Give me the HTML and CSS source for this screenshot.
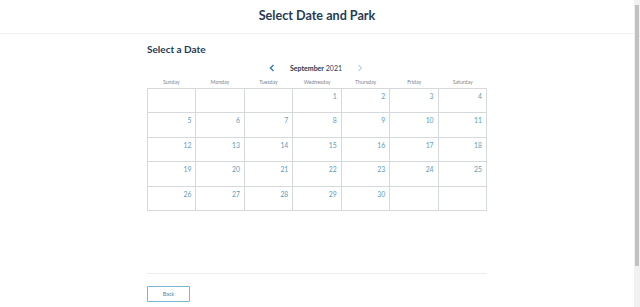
FILE: index.html
```html
<!DOCTYPE html>
<html lang="en">
<head>
<meta charset="UTF-8">
<meta name="viewport" content="width=device-width, initial-scale=1.0">
<title>Select Date and Park</title>
<link rel="stylesheet" href="styles.css">
</head>
<body>

<div class="window">
    <div class="page">

        <!-- HEADER -->
        <header class="top-bar">
            <h1>Select Date and Park</h1>
        </header>

        <!-- CALENDAR -->
        <main class="content">
            <h2 class="section-title">Select a Date</h2>

            <div class="month-nav">
                <span class="arrow arrow-prev">
                    <svg width="6" height="8" viewBox="0 0 6 8"><path d="M4.5 1 L1.5 4 L4.5 7" fill="none" stroke="currentColor" stroke-width="1.6"/></svg>
                </span>
                <span class="month-label"><b>September</b> 2021</span>
                <span class="arrow arrow-next">
                    <svg width="6" height="8" viewBox="0 0 6 8"><path d="M1.5 1 L4.5 4 L1.5 7" fill="none" stroke="currentColor" stroke-width="1.2"/></svg>
                </span>
            </div>

            <div class="weekdays">
                <span>Sunday</span>
                <span>Monday</span>
                <span>Tuesday</span>
                <span>Wednesday</span>
                <span>Thursday</span>
                <span>Friday</span>
                <span>Saturday</span>
            </div>

            <div class="days" id="days"></div>

            <div class="actions">
                <button class="btn-back">Back</button>
            </div>
        </main>
    </div>

    <!-- SCROLLBAR -->
    <div class="scrollbar">
        <div class="scroll-arrow up"></div>
        <div class="scroll-thumb"></div>
        <div class="scroll-arrow down"></div>
    </div>
</div>

<script>
/* DAYS */
const grid = document.getElementById('days');
const offset = 3; // sept 1 2021 = wednesday
for (let i = 0; i < 35; i++) {
    const cell = document.createElement('div');
    cell.className = 'day';
    const n = i - offset + 1;
    if (n >= 1 && n <= 30) cell.textContent = n;
    grid.appendChild(cell);
}
</script>

</body>
</html>
```

FILE: styles.css
```css
* {
    margin: 0;
    padding: 0;
    box-sizing: border-box;
}

html, body {
    width: 100%;
    height: 100%;
    background: #fff;
    font-family: 'Lato', 'Noto Sans', Arial, sans-serif;
    color: #253b56;
    overflow: hidden;
}

.window {
    display: flex;
    height: 100%;
}

.page {
    flex: 1;
    min-width: 0;
}

/* =======================
     HEADER
======================== */
.top-bar {
    height: 34px;
    border-bottom: 1px solid #f0f0f0;
    display: flex;
    align-items: center;
    justify-content: center;
}

.top-bar h1 {
    font-size: 12.6px;
    font-weight: 700;
    margin-top: -2px;
}

/* =======================
     CONTENT
======================== */
.content {
    width: 340px;
    margin: 0 auto;
}

.section-title {
    font-size: 10px;
    font-weight: 700;
    margin-top: 9px;
    line-height: 12px;
}

.month-nav {
    display: flex;
    align-items: center;
    justify-content: center;
    gap: 15px;
    margin-top: 7px;
    height: 12px;
    padding-right: 2px;
}

.month-label {
    font-size: 7px;
    color: #253b56;
}

.month-label b {
    font-weight: 700;
}

.arrow {
    display: flex;
    color: #3a87b0;
}

.arrow-next {
    color: #b9d6e4;
}

.weekdays {
    display: grid;
    grid-template-columns: repeat(7, 1fr);
    margin-top: 3px;
    height: 10px;
    align-items: center;
}

.weekdays span {
    text-align: center;
    font-size: 5.2px;
    color: #7d8792;
}

.days {
    display: grid;
    grid-template-columns: repeat(7, 1fr);
    grid-auto-rows: 23.4px;
    gap: 1px;
    background: #d6d9dc;
    border: 1px solid #d6d9dc;
    margin-top: 1px;
}

.day {
    background: #fff;
    text-align: right;
    padding: 3px 4px 0 0;
    font-size: 6.8px;
    color: #5c9dbb;
}

/* =======================
     ACTIONS
======================== */
.actions {
    margin-top: 62px;
    border-top: 1px solid #ececec;
    padding-top: 6px;
}

.btn-back {
    width: 43px;
    height: 16px;
    background: #fff;
    border: 1px solid #7ab6d3;
    border-radius: 1px;
    font-family: inherit;
    font-size: 5.5px;
    color: #5a7f93;
}

/* =======================
     SCROLLBAR
======================== */
.scrollbar {
    width: 6px;
    background: #f1f1f1;
    display: flex;
    flex-direction: column;
    align-items: center;
}

.scroll-arrow {
    height: 5px;
    width: 100%;
}

.scroll-thumb {
    width: 4px;
    height: 261px;
    background: #c1c1c1;
}
```
